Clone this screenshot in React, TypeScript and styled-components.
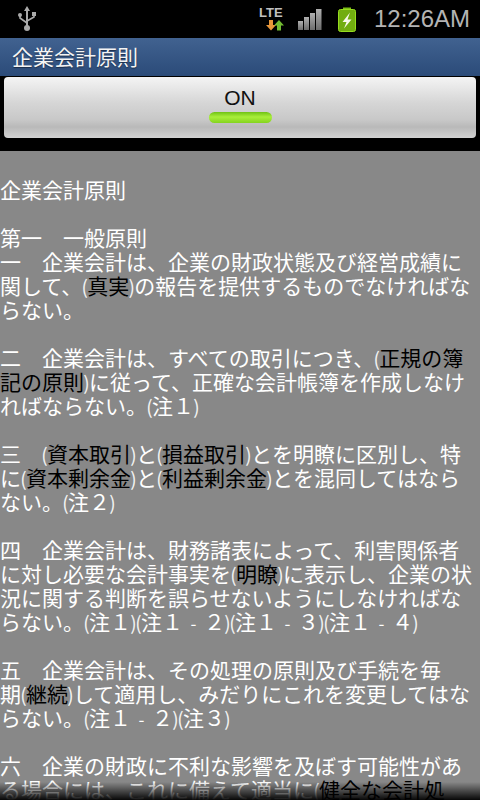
import { Fragment } from "react";
import styled, { createGlobalStyle } from "styled-components";

const GlobalStyle = createGlobalStyle`
    html, body {
        margin: 0;
        padding: 0;
        height: 800px;
        overflow: hidden;
        background: #000;
    }
`;

const Screen = styled.div`
    width: 480px;
    height: 800px;
    display: flex;
    flex-direction: column;
    position: relative;
    overflow: hidden;
    background: #000;
    font-family: "Noto Sans CJK JP", "Liberation Sans", sans-serif;
`;

const StatusBar = styled.div`
    height: 38px;
    flex: none;
    display: flex;
    align-items: center;
    padding: 0 10px 0 17px;
    background: #000;
`;

const StatusIcons = styled.div`
    margin-left: auto;
    display: flex;
    align-items: center;
`;

const Clock = styled.span`
    margin-left: 18px;
    font-family: "Liberation Sans", sans-serif;
    font-size: 24px;
    color: #b4b4b4;
    line-height: 38px;
`;

const TitleBar = styled.div`
    height: 38px;
    flex: none;
    display: flex;
    align-items: center;
    padding: 0 0 2px 12px;
    box-sizing: border-box;
    font-size: 21px;
    color: #f4f4f4;
    text-shadow: 0 1px 1px #1a2c48;
    background: linear-gradient(#416290, #2b4b79);
`;

const ButtonArea = styled.div`
    height: 75px;
    flex: none;
    box-sizing: border-box;
    padding: 1px 4px 13px;
    background: #000;
`;

const ToggleButton = styled.div`
    height: 61px;
    border-radius: 4px;
    display: flex;
    flex-direction: column;
    align-items: center;
    padding-top: 9px;
    box-sizing: border-box;
    background: linear-gradient(#f4f4f4 0%, #d6d6d6 42%, #c8c8c8 70%, #b9b9b9 82%, #d2d2d2 100%);
`;

const ToggleLabel = styled.span`
    font-family: "Liberation Sans", sans-serif;
    font-size: 21px;
    line-height: 24px;
    color: #111;
`;

const Indicator = styled.span`
    width: 63px;
    height: 11px;
    margin-top: 2px;
    border-radius: 6px;
    background: linear-gradient(#6fc214, #a9ee3a 45%, #84d41e);
`;

const Content = styled.div`
    flex: 1;
    min-height: 0;
    padding-top: 26px;
    background: #888;
    color: #fff;
    font-size: 21px;
    line-height: 24px;
    font-feature-settings: "chws" 0;
`;

const Line = styled.div`
    height: 24px;
    white-space: nowrap;
`;

const Answer = styled.span`
    color: #000;
`;

// the round brackets are much narrower than the font's own
const Paren = styled.span`
    display: inline-flex;
    justify-content: center;
    width: 5px;
    font-size: 19px;
    color: #f4f4f4;
`;

// short hyphen in a full-width cell
const Dash = styled.span`
    display: inline-flex;
    justify-content: center;
    width: 21px;
    font-size: 17px;
`;

const BottomFade = styled.div`
    position: absolute;
    left: 0;
    right: 0;
    bottom: 0;
    height: 18px;
    background: linear-gradient(rgba(0, 0, 0, 0), rgba(0, 0, 0, 0.95));
`;

// [..] marks the black answer words
const lines = [
    "企業会計原則",
    "",
    "第一　一般原則",
    "一　企業会計は、企業の財政状態及び経営成績に",
    "関して、([真実])の報告を提供するものでなければな",
    "らない。",
    "",
    "二　企業会計は、すべての取引につき、([正規の簿]",
    "[記の原則])に従って、正確な会計帳簿を作成しなけ",
    "ればならない。(注１)",
    "",
    "三　([資本取引])と([損益取引])とを明瞭に区別し、特",
    "に([資本剰余金])と([利益剰余金])とを混同してはなら",
    "ない。(注２)",
    "",
    "四　企業会計は、財務諸表によって、利害関係者",
    "に対し必要な会計事実を([明瞭])に表示し、企業の状",
    "況に関する判断を誤らせないようにしなければな",
    "らない。(注１)(注１-２)(注１-３)(注１-４)",
    "",
    "五　企業会計は、その処理の原則及び手続を毎",
    "期([継続])して適用し、みだりにこれを変更してはな",
    "らない。(注１-２)(注３)",
    "",
    "六　企業の財政に不利な影響を及ぼす可能性があ",
    "る場合には、これに備えて適当に([健全な会計処]",
];

const renderLine = (text: string) =>
    text.split(/(\[[^\]]*\]|[()-])/).map((part, i) => {
        if (part === "(" || part === ")") return <Paren key={i}>{part}</Paren>;
        if (part === "-") return <Dash key={i}>{part}</Dash>;
        if (part.startsWith("[")) return <Answer key={i}>{part.slice(1, -1)}</Answer>;
        return <Fragment key={i}>{part}</Fragment>;
    });

const UsbIcon = () => (
    <svg width="20" height="26" viewBox="0 0 20 26">
        <path d="M10 0 L7 5 H9 V21 H11 V5 H13 Z" fill="#aaa" />
        <circle cx="10" cy="22" r="3" fill="#aaa" />
        <circle cx="3" cy="9" r="2" fill="#aaa" />
        <rect x="15" y="6" width="4" height="4" fill="#aaa" />
        <path d="M3 9 V12 L10 17 M17 9 V11 L10 15" stroke="#aaa" strokeWidth="1.6" fill="none" />
    </svg>
);

const LteIcon = () => (
    <svg width="26" height="26" viewBox="0 0 26 26">
        <text x="0" y="11" fontFamily="Liberation Sans, sans-serif" fontWeight="700" fontSize="13" fill="#c0c0c0">
            LTE
        </text>
        <path d="M10 14 H14 V19 H17 L12 24.500 L7 19 H10 Z" fill="#e8973a" />
        <path d="M18 24.500 H22 V19.500 H25 L20 14 L15 19.500 H18 Z" fill="#72bb32" />
    </svg>
);

const SignalIcon = () => (
    <svg width="24" height="22" viewBox="0 0 24 22">
        <defs>
            <linearGradient id="bar" x1="0" y1="0" x2="0" y2="1">
                <stop offset="0" stopColor="#b0b0b0" />
                <stop offset="1" stopColor="#6c6c6c" />
            </linearGradient>
        </defs>
        <rect x="0" y="13" width="5" height="9" fill="url(#bar)" />
        <rect x="6" y="9" width="5" height="13" fill="url(#bar)" />
        <rect x="12" y="5" width="5" height="17" fill="url(#bar)" />
        <rect x="18" y="1" width="5.500" height="21" fill="url(#bar)" />
    </svg>
);

const BatteryIcon = () => (
    <svg width="18" height="25" viewBox="0 0 18 25">
        <rect x="5" y="0.500" width="8" height="3" fill="#7cbe14" />
        <rect x="0.500" y="2.500" width="17" height="22" rx="2" fill="#72ad10" stroke="#96dc1e" />
        <path d="M12 5.500 L4.500 15 H8.500 L6 21.500 L13.500 12.500 H9.500 Z" fill="#f8f8ea" />
    </svg>
);

const LteSlot = styled.span`
    display: flex;
    margin-right: 13px;
`;

const SignalSlot = styled.span`
    display: flex;
    margin-right: 16px;
`;

const App = () => {
    return (
        <Screen>
            <GlobalStyle />
            <StatusBar>
                <UsbIcon />
                <StatusIcons>
                    <LteSlot>
                        <LteIcon />
                    </LteSlot>
                    <SignalSlot>
                        <SignalIcon />
                    </SignalSlot>
                    <BatteryIcon />
                    <Clock>12:26AM</Clock>
                </StatusIcons>
            </StatusBar>
            <TitleBar>企業会計原則</TitleBar>
            <ButtonArea>
                <ToggleButton>
                    <ToggleLabel>ON</ToggleLabel>
                    <Indicator />
                </ToggleButton>
            </ButtonArea>
            <Content>
                {lines.map((text, i) => (
                    <Line key={i}>{renderLine(text)}</Line>
                ))}
            </Content>
            <BottomFade />
        </Screen>
    );
};

export default App;
